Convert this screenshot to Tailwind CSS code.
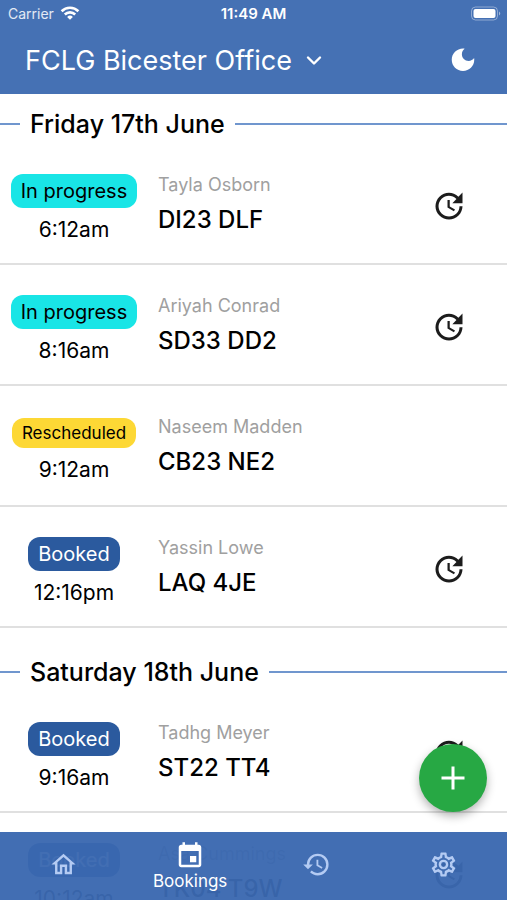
<!DOCTYPE html>
<html lang="en">
<head>
<meta charset="utf-8">
<meta name="viewport" content="width=device-width, initial-scale=1">
<title>Bookings</title>
<script src="https://cdn.jsdelivr.net/npm/@tailwindcss/browser@4"></script>
</head>
<body class="relative flex h-screen flex-col overflow-hidden bg-white font-['Inter','Liberation_Sans',sans-serif] text-black">
<svg class="hidden" aria-hidden="true">
  <symbol id="update" viewBox="0 0 24 24"><path d="M21,10.12H14.22L16.96,7.3C14.23,4.6 9.81,4.5 7.08,7.2C4.35,9.91 4.35,14.28 7.08,17C9.81,19.7 14.23,19.7 16.96,17C18.32,15.65 19,14.08 19,12.1H21C21,14.08 20.12,16.65 18.36,18.39C14.85,21.87 9.15,21.87 5.64,18.39C2.14,14.92 2.11,9.28 5.62,5.81C9.13,2.34 14.76,2.34 18.27,5.81L21,3V10.12M12.5,8V12.25L16,14.33L15.28,15.54L11,13V8H12.5Z"/></symbol>
</svg>

<header class="shrink-0 bg-[#4571b4] text-white">
  <div class="grid h-7 grid-cols-[1fr_auto_1fr] items-center px-2">
    <div class="flex items-center gap-1.5 text-sm text-white/85">
      <span>Carrier</span>
      <svg class="h-4 w-5 text-white" viewBox="0 0 20 16" fill="none" stroke="currentColor" stroke-width="2.6" aria-hidden="true"><path d="M1.6 5.2a12 12 0 0 1 16.8 0"/><path d="M4.8 8.5a7.4 7.4 0 0 1 10.4 0"/><path d="M10 13.8 7.1 10.9a4.1 4.1 0 0 1 5.8 0Z" fill="currentColor" stroke="none"/></svg>
    </div>
    <span class="text-center text-[15px] font-semibold">11:49 AM</span>
    <svg class="-mr-1 h-4 w-8 justify-self-end" viewBox="0 0 32 16" aria-hidden="true"><rect x=".5" y="1" width="26" height="13" rx="4" fill="none" stroke="#fff" stroke-opacity=".4"/><rect x="2.5" y="3" width="22" height="9" rx="2" fill="#fff"/><path d="M28 5.5q2.500 2 0 4z" fill="#fff" fill-opacity=".5"/></svg>
  </div>
  <div class="flex h-[66px] items-center justify-between pl-[25px] pr-[29px]">
    <button type="button" class="flex items-center gap-3.5 text-[27px] leading-8">
      <span>FCLG Bicester Office</span>
      <svg class="size-4" viewBox="0 0 16 16" fill="none" stroke="currentColor" stroke-width="2.4" stroke-linecap="round" stroke-linejoin="round" aria-hidden="true"><path d="m2 4.500 6 6 6-6"/></svg>
    </button>
    <button type="button" aria-label="Dark mode"><svg class="size-[30px]" viewBox="0 0 24 24" fill="currentColor" aria-hidden="true"><path d="M12 2c-4.97 0-9 4.03-9 9s4.03 9 9 9 9-4.03 9-9c0-.46-.04-.92-.1-1.36-.98 1.37-2.58 2.26-4.4 2.26-2.98 0-5.4-2.42-5.4-5.4 0-1.81.89-3.42 2.26-4.4C12.92 2.04 12.46 2 12 2z"/></svg></button>
  </div>
</header>

<main class="min-h-0 grow overflow-y-auto [scrollbar-width:none]">
  <section>
    <h2 class="flex items-center gap-2.5 pt-2.5 text-[25px] leading-10 font-medium before:h-0.5 before:w-5 before:bg-[#7096ce] after:h-0.5 after:grow after:bg-[#7096ce]">Friday 17th June</h2>
    <ul>
      <li class="flex h-[121px] items-center border-b-2 border-[#e0e0e0]">
        <div class="flex w-37 flex-col items-center gap-2 pt-2.5 text-xl leading-7"><span class="rounded-xl bg-[#19e5e6] px-2.5 py-[3px]">In progress</span><time class="text-[21px] leading-7">6:12am</time></div>
        <div class="grow pb-0.5 pl-2.5"><p class="text-lg leading-[34px] text-[#a0a0a0]">Tayla Osborn</p><p class="text-2xl leading-9 font-medium">DI23 DLF</p></div>
        <button type="button" aria-label="Reschedule" class="mr-10 pt-1"><svg class="size-9 fill-[#1c1c1c]"><use href="#update"/></svg></button>
      </li>
      <li class="flex h-[121px] items-center border-b-2 border-[#e0e0e0]">
        <div class="flex w-37 flex-col items-center gap-2 pt-2.5 text-xl leading-7"><span class="rounded-xl bg-[#19e5e6] px-2.5 py-[3px]">In progress</span><time class="text-[21px] leading-7">8:16am</time></div>
        <div class="grow pb-0.5 pl-2.5"><p class="text-lg leading-[34px] text-[#a0a0a0]">Ariyah Conrad</p><p class="text-2xl leading-9 font-medium">SD33 DD2</p></div>
        <button type="button" aria-label="Reschedule" class="mr-10 pt-1"><svg class="size-9 fill-[#1c1c1c]"><use href="#update"/></svg></button>
      </li>
      <li class="flex h-[121px] items-center border-b-2 border-[#e0e0e0]">
        <div class="flex w-37 flex-col items-center gap-2 pt-2.5 text-xl leading-7"><span class="rounded-xl bg-[#fdd835] px-2.5 py-[3px] text-[17px] leading-6">Rescheduled</span><time class="text-[21px] leading-7">9:12am</time></div>
        <div class="grow pb-0.5 pl-2.5"><p class="text-lg leading-[34px] text-[#a0a0a0]">Naseem Madden</p><p class="text-2xl leading-9 font-medium">CB23 NE2</p></div>
      </li>
      <li class="flex h-[121px] items-center border-b-2 border-[#e0e0e0]">
        <div class="flex w-37 flex-col items-center gap-2 pt-2.5 text-xl leading-7"><span class="rounded-xl bg-[#2b5a9e] px-2.5 py-[3px] text-white">Booked</span><time class="text-[21px] leading-7">12:16pm</time></div>
        <div class="grow pb-0.5 pl-2.5"><p class="text-lg leading-[34px] text-[#a0a0a0]">Yassin Lowe</p><p class="text-2xl leading-9 font-medium">LAQ 4JE</p></div>
        <button type="button" aria-label="Reschedule" class="mr-10 pt-1"><svg class="size-9 fill-[#1c1c1c]"><use href="#update"/></svg></button>
      </li>
    </ul>
  </section>
  <section>
    <h2 class="flex items-center gap-2.5 pt-6 text-[25px] leading-10 font-medium before:h-0.5 before:w-5 before:bg-[#7096ce] after:h-0.5 after:grow after:bg-[#7096ce]">Saturday 18th June</h2>
    <ul>
      <li class="flex h-[121px] items-center border-b-2 border-[#e0e0e0]">
        <div class="flex w-37 flex-col items-center gap-2 pt-2.5 text-xl leading-7"><span class="rounded-xl bg-[#2b5a9e] px-2.5 py-[3px] text-white">Booked</span><time class="text-[21px] leading-7">9:16am</time></div>
        <div class="grow pb-0.5 pl-2.5"><p class="text-lg leading-[34px] text-[#a0a0a0]">Tadhg Meyer</p><p class="text-2xl leading-9 font-medium">ST22 TT4</p></div>
        <button type="button" aria-label="Reschedule" class="mr-10 pt-1"><svg class="size-9 fill-[#1c1c1c]"><use href="#update"/></svg></button>
      </li>
      <li class="flex h-[121px] items-center border-b-2 border-[#e0e0e0]">
        <div class="flex w-37 flex-col items-center gap-2 pt-2.5 text-xl leading-7"><span class="rounded-xl bg-[#2b5a9e] px-2.5 py-[3px] text-white">Booked</span><time class="text-[21px] leading-7">10:12am</time></div>
        <div class="grow pb-0.5 pl-2.5"><p class="text-lg leading-[34px] text-[#a0a0a0]">Asa Cummings</p><p class="text-2xl leading-9 font-medium">TK04 T9W</p></div>
        <button type="button" aria-label="Reschedule" class="mr-10 pt-1"><svg class="size-9 fill-[#1c1c1c]"><use href="#update"/></svg></button>
      </li>
    </ul>
  </section>
</main>

<button type="button" aria-label="Add booking" class="absolute right-5 bottom-[88px] flex size-[68px] items-center justify-center rounded-full bg-[#27a844] shadow-[0_4px_10px_rgba(0,0,0,0.3)]"><svg class="size-6" viewBox="0 0 24 24" fill="none" stroke="#fff" stroke-width="3" aria-hidden="true"><path d="M12 .5v23M.5 12h23"/></svg></button>

<nav class="absolute inset-x-0 bottom-0 grid h-[68px] grid-cols-4 bg-[#3a68b0]/96 pb-1 text-[#b4cbf3]">
  <a href="#" aria-label="Home" class="flex items-center justify-center"><svg class="size-[29px]" viewBox="0 0 24 24" fill="currentColor"><path d="M12 5.69L17 10.19V18H15V12H9V18H7V10.19L12 5.69M12 3L2 12H5V20H11V14H13V20H19V12H22L12 3Z"/></svg></a>
  <a href="#" aria-current="page" class="flex flex-col items-center justify-center pt-1 text-white"><svg class="size-[30px]" viewBox="0 0 24 24" fill="currentColor" aria-hidden="true"><path d="M17 12h-5v5h5v-5zM16 1v2H8V1H6v2H5c-1.11 0-1.99.9-1.99 2L3 19c0 1.1.89 2 2 2h14c1.1 0 2-.9 2-2V5c0-1.1-.9-2-2-2h-1V1h-2zm3 18H5V8h14v11z"/></svg><span class="text-[17px] leading-5">Bookings</span></a>
  <a href="#" aria-label="History" class="flex items-center justify-center"><svg class="size-[29px]" viewBox="0 0 24 24" fill="currentColor"><path d="M13.5,8H12V13L16.28,15.54L17,14.33L13.5,12.25V8M13,3A9,9 0 0,0 4,12H1L4.96,16.03L9,12H6A7,7 0 0,1 13,5A7,7 0 0,1 20,12A7,7 0 0,1 13,19C11.07,19 9.32,18.21 8.06,16.94L6.64,18.36C8.27,20 10.5,21 13,21A9,9 0 0,0 22,12A9,9 0 0,0 13,3"/></svg></a>
  <a href="#" aria-label="Settings" class="flex items-center justify-center"><svg class="size-[29px]" viewBox="0 0 24 24" fill="currentColor"><path d="M12,8A4,4 0 0,1 16,12A4,4 0 0,1 12,16A4,4 0 0,1 8,12A4,4 0 0,1 12,8M12,10A2,2 0 0,0 10,12A2,2 0 0,0 12,14A2,2 0 0,0 14,12A2,2 0 0,0 12,10M10,22C9.75,22 9.54,21.82 9.5,21.58L9.13,18.93C8.5,18.68 7.96,18.34 7.44,17.94L4.95,18.95C4.73,19.03 4.46,18.95 4.34,18.73L2.34,15.27C2.21,15.05 2.27,14.78 2.46,14.63L4.57,12.97L4.5,12L4.57,11L2.46,9.37C2.27,9.22 2.21,8.95 2.34,8.73L4.34,5.27C4.46,5.05 4.73,4.96 4.95,5.05L7.44,6.05C7.96,5.66 8.5,5.32 9.13,5.07L9.5,2.42C9.54,2.18 9.75,2 10,2H14C14.25,2 14.46,2.18 14.5,2.42L14.87,5.07C15.5,5.32 16.04,5.66 16.56,6.05L19.05,5.05C19.27,4.96 19.54,5.05 19.66,5.27L21.66,8.73C21.79,8.95 21.73,9.22 21.54,9.37L19.43,11L19.5,12L19.43,13L21.54,14.63C21.73,14.78 21.79,15.05 21.66,15.27L19.66,18.73C19.54,18.95 19.27,19.04 19.05,18.95L16.56,17.95C16.04,18.34 15.5,18.68 14.87,18.93L14.5,21.58C14.46,21.82 14.25,22 14,22H10M11.25,4L10.88,6.61C9.68,6.86 8.62,7.5 7.85,8.39L5.44,7.35L4.69,8.6L6.8,10.15C6.4,11.37 6.4,12.64 6.8,13.86L4.68,15.42L5.43,16.67L7.86,15.62C8.63,16.5 9.68,17.14 10.87,17.38L11.24,20H12.76L13.13,17.39C14.32,17.14 15.37,16.5 16.14,15.62L18.57,16.67L19.32,15.42L17.2,13.87C17.6,12.64 17.6,11.37 17.2,10.15L19.31,8.6L18.56,7.35L16.15,8.39C15.38,7.5 14.32,6.86 13.12,6.62L12.75,4H11.25Z"/></svg></a>
</nav>
</body>
</html>
